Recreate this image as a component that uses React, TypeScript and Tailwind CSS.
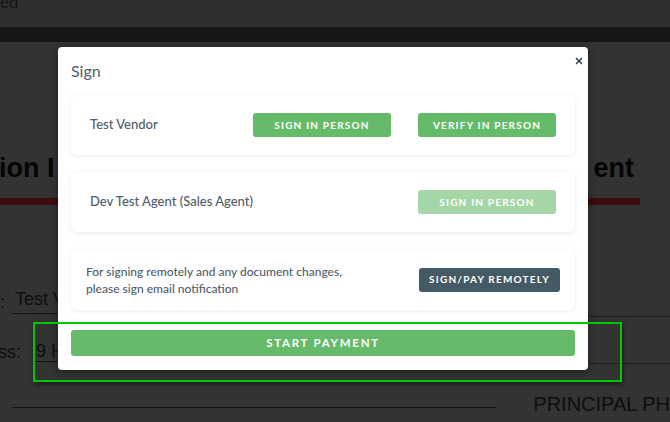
import { X } from 'lucide-react';

const sans = { fontFamily: 'Lato, "Noto Sans", sans-serif' };

const Card = ({ children, className = '' }: { children: React.ReactNode; className?: string }) => (
  <div
    className={`flex h-[60px] items-center justify-between rounded-md bg-white shadow-[0_1px_4px_rgba(0,0,0,0.09)] ${className}`}
  >
    {children}
  </div>
);

const Btn = ({ label, tone, w = 'w-[138px]' }: { label: string; tone: string; w?: string }) => (
  <button
    className={`flex h-6 ${w} items-center justify-center rounded-[3px] text-[10px] font-bold tracking-[0.12em] text-white ${tone}`}
  >
    {label}
  </button>
);

export default function App() {
  return (
    <div className="relative h-[422px] w-[670px] overflow-hidden bg-[#333333]" style={{ fontFamily: '"Liberation Sans", Arial, sans-serif' }}>
      {/* dimmed page behind the dialog */}
      <div className="h-[27px] overflow-hidden bg-[#2f2f2f]">
        <span className="-mt-[8px] block text-[17px] leading-[20px] text-[#151515]" style={sans}>
          ed
        </span>
      </div>
      <div className="h-[15px] bg-[#161616]" />

      <div className="flex items-end justify-between pt-[110px] text-[27px] font-bold leading-[32px] text-[#050505]">
        <span className="-ml-[1px]">ion I</span>
        <span className="mr-[36px]">ent</span>
      </div>
      <div className="mt-[14px] h-[7px] w-[640px] bg-[#3d0d0d]" />

      <div className="mt-[82px] flex items-end text-[18px] leading-[24px] text-[#0e0e0e]">
        <span className="w-[12px]">:</span>
        <span className="border-b border-[#141414] pb-[2px] pl-[3px] pr-[10px]">Test V</span>
      </div>
      <div className="mt-[27px] flex items-end text-[18px] leading-[20px] text-[#0e0e0e]">
        <span className="-ml-[2px] w-[35px]">ss:</span>
        <span className="border-b border-[#141414] pl-[3px]">9 H</span>
      </div>
      <div className="mt-[32px] flex items-start">
        <div className="ml-[12px] mt-[13px] h-px w-[488px] bg-[#141414]" />
        <span className="ml-[37px] whitespace-nowrap text-[20px] leading-[20px] text-[#0e0e0e]">PRINCIPAL PH</span>
      </div>

      {/* right side field lines */}
      <div className="absolute left-[588px] top-[316px] h-px w-[82px] bg-[#1e1e1e]" />
      <div className="absolute left-[588px] top-[363px] h-px w-[82px] bg-[#1e1e1e]" />

      {/* dialog */}
      <div
        className="absolute left-[58px] top-[47px] w-[530px] rounded-[4px] bg-white px-[13px] pb-[14px] pt-[14px] text-[#4f5d69] shadow-[0_2px_10px_rgba(0,0,0,0.4)]"
        style={sans}
      >
        <X className="absolute right-[4px] top-[9px] h-[10px] w-[10px] text-[#37474f]" strokeWidth={4} />
        <h2 className="mb-[14px] text-[16px] leading-[20px]">Sign</h2>

        <div className="flex flex-col gap-[17px]">
          <Card className="pl-[19px] pr-[19px]">
            <span className="text-[13px] font-medium">Test Vendor</span>
            <div className="flex gap-[27px]">
              <Btn label="SIGN IN PERSON" tone="bg-[#66bb6a]" />
              <Btn label="VERIFY IN PERSON" tone="bg-[#66bb6a]" />
            </div>
          </Card>

          <Card className="pl-[19px] pr-[19px]">
            <span className="text-[13px] font-medium">Dev Test Agent (Sales Agent)</span>
            <Btn label="SIGN IN PERSON" tone="bg-[#a5d6a7]" />
          </Card>

          <Card className="h-[61px] pl-[15px] pr-[15px]">
            <span className="text-[12px] font-medium leading-[17px]">
              For signing remotely and any document changes,
              <br />
              please sign email notification
            </span>
            <Btn label="SIGN/PAY REMOTELY" tone="bg-[#455a64]" w="w-[141px]" />
          </Card>
        </div>

        <button className="mt-[20px] flex h-[26px] w-full items-center justify-center rounded-[3px] bg-[#66bb6a] text-[11.5px] font-bold tracking-[0.15em] text-white">
          START PAYMENT
        </button>
      </div>

      {/* annotation box */}
      <div className="absolute left-[33px] top-[322px] h-[60px] w-[589px] border-2 border-[#00c800] shadow-[1px_2px_4px_rgba(0,0,0,0.5)]" />
    </div>
  );
}
